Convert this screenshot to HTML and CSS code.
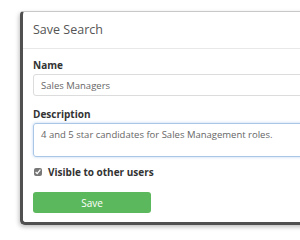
FILE: index.html
```html
<!DOCTYPE html>
<html lang="en">
<head>
    <meta charset="UTF-8">
    <meta name="viewport" content="width=device-width, initial-scale=1.0">
    <title>Save Search</title>
    <link rel="stylesheet" href="styles.css">
</head>
<body>
    <div class="stage">
        <div class="modal">
            <div class="modal-header">Save Search</div>
            <div class="modal-body">
                <label class="field-label" for="name">Name</label>
                <input class="field-input" type="text" id="name" value="Sales Managers">
                <label class="field-label" for="desc">Description</label>
                <div class="field-area" id="desc">4 and 5 star candidates for Sales Management roles.</div>
                <label class="check-row">
                    <input type="checkbox" checked>
                    <span>Visible to other users</span>
                </label>
                <button class="btn-save">Save</button>
            </div>
        </div>
    </div>
</body>
</html>
```

FILE: styles.css
```css
body {
    margin: 0;
    background-color: #ffffff;
    font-family: 'Open Sans', 'Liberation Sans', sans-serif;
    color: #555;
    overflow: hidden;
    height: 240px;
}

.stage {
    padding: 11px 0 8px 20px;
    overflow: hidden;
}

.modal {
    width: 300px;
    background-color: #fff;
    border-top: 1px solid #c8c8c8;
    border-left: 3px solid #505050;
    border-bottom: 3px solid #505050;
    border-radius: 4px 0 0 5px;
    box-shadow: -1px 2px 4px rgba(0, 0, 0, 0.25);
}

.modal-header {
    font-size: 12.5px;
    line-height: 20px;
    padding: 8px 10px 8px 10px;
    border-bottom: 1px solid #e8e8e8;
    color: #555;
}

.modal-body {
    padding: 9px 10px 9px 10px;
    display: flex;
    flex-direction: column;
    align-items: flex-start;
}

.field-label {
    font-size: 10px;
    font-weight: 700;
    line-height: 14px;
    color: #333;
    margin-bottom: 2px;
}

.field-input {
    box-sizing: border-box;
    width: 100%;
    height: 22px;
    margin: 0 0 11px 0;
    padding: 0 7px;
    font-family: inherit;
    font-size: 9.5px;
    color: #666;
    border: 1px solid #dcdcdc;
    border-radius: 3px;
    background: #fff;
}

.field-area {
    box-sizing: border-box;
    width: 100%;
    height: 34px;
    padding: 4px 7px;
    font-size: 9.5px;
    line-height: 14px;
    color: #666;
    border: 1px solid #a9c6e6;
    border-radius: 3px;
    box-shadow: 0 0 3px rgba(102, 160, 225, 0.45);
}

.check-row {
    display: flex;
    align-items: center;
    gap: 4px;
    margin-top: 8px;
    font-size: 10px;
    font-weight: 700;
    color: #333;
}

.check-row input {
    width: 8px;
    height: 8px;
    margin: 0 2px 0 1px;
    accent-color: #777;
}

.btn-save {
    margin-top: 13px;
    width: 118px;
    height: 21px;
    border: none;
    border-radius: 3px;
    background-color: #5cb85c;
    color: #fff;
    font-family: inherit;
    font-size: 10px;
}
```
